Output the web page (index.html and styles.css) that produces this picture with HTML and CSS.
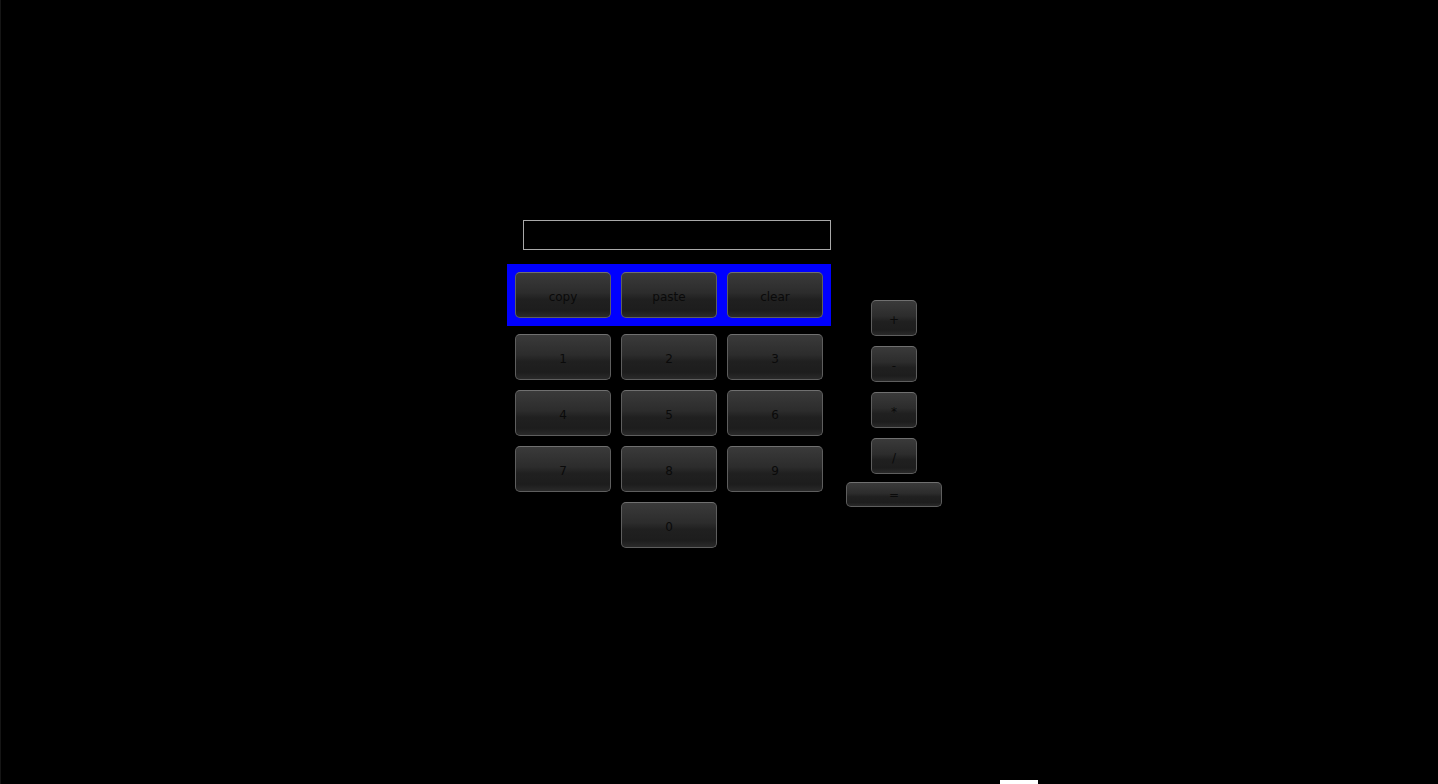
FILE: index.html
```html
<!DOCTYPE html>
<html>
<head>
<meta charset="utf-8">
<link rel="stylesheet" href="styles.css">
</head>
<body>
<div class="app">
  <div class="left">
    <input class="display" type="text">
    <div class="panel">
      <button class="btn">copy</button>
      <button class="btn">paste</button>
      <button class="btn">clear</button>
    </div>
    <div class="numbers">
      <button class="btn">1</button>
      <button class="btn">2</button>
      <button class="btn">3</button>
      <button class="btn">4</button>
      <button class="btn">5</button>
      <button class="btn">6</button>
      <button class="btn">7</button>
      <button class="btn">8</button>
      <button class="btn">9</button>
      <button class="btn zero">0</button>
    </div>
  </div>
  <div class="ops">
    <button class="btn op">+</button>
    <button class="btn op">-</button>
    <button class="btn op">*</button>
    <button class="btn op">/</button>
    <button class="btn eq">=</button>
  </div>
</div>
<div class="dock-mark"></div>
</body>
</html>
```
FILE: styles.css
```css
html, body {
  margin: 0;
  padding: 0;
  background: #000;
  height: 100%;
  overflow: hidden;
}
body {
  border-left: 1px solid #151515;
  box-sizing: border-box;
  font-family: "DejaVu Sans", "Liberation Sans", sans-serif;
}
.app {
  display: flex;
  align-items: flex-start;
  padding-top: 220px;
  padding-left: 506px;
  gap: 15px;
}
.left {
  display: flex;
  flex-direction: column;
  width: 324px;
}
.display {
  margin: 0 0 14px 16px;
  width: 308px;
  height: 30px;
  box-sizing: border-box;
  background: #000;
  border: 1px solid #a9a9a9;
  padding: 0;
  outline: none;
}
.panel {
  background: #0000ff;
  padding: 8px;
  display: flex;
  gap: 10px;
  height: 62px;
  box-sizing: border-box;
}
.numbers {
  display: grid;
  grid-template-columns: repeat(3, 96px);
  grid-auto-rows: 46px;
  gap: 10px;
  padding: 8px 0 0 8px;
}
.zero {
  grid-column: 2;
}
.btn {
  width: 96px;
  height: 46px;
  margin: 0;
  padding: 3px 0 0 0;
  box-sizing: border-box;
  border: 1px solid #5e5e5e;
  border-top-color: #707070;
  border-radius: 5px;
  background: linear-gradient(to bottom, #3a3a3a 0%, #2c2c2c 45%, #202020 60%, #1d1d1d 85%, #2a2a2a 100%);
  color: #0a0a0a;
  font-family: "DejaVu Sans", "Liberation Sans", sans-serif;
  font-size: 12px;
  line-height: 1;
  display: flex;
  align-items: center;
  justify-content: center;
  cursor: default;
}
.ops {
  display: flex;
  flex-direction: column;
  align-items: center;
  width: 96px;
  padding-top: 80px;
  gap: 10px;
}
.op {
  width: 46px;
  height: 36px;
}
.eq {
  width: 96px;
  height: 25px;
  margin-top: -2px;
  padding-top: 1px;
}
.dock-mark {
  position: fixed;
  left: 1000px;
  bottom: 0;
  width: 38px;
  height: 4px;
  background: #fff;
}
```
